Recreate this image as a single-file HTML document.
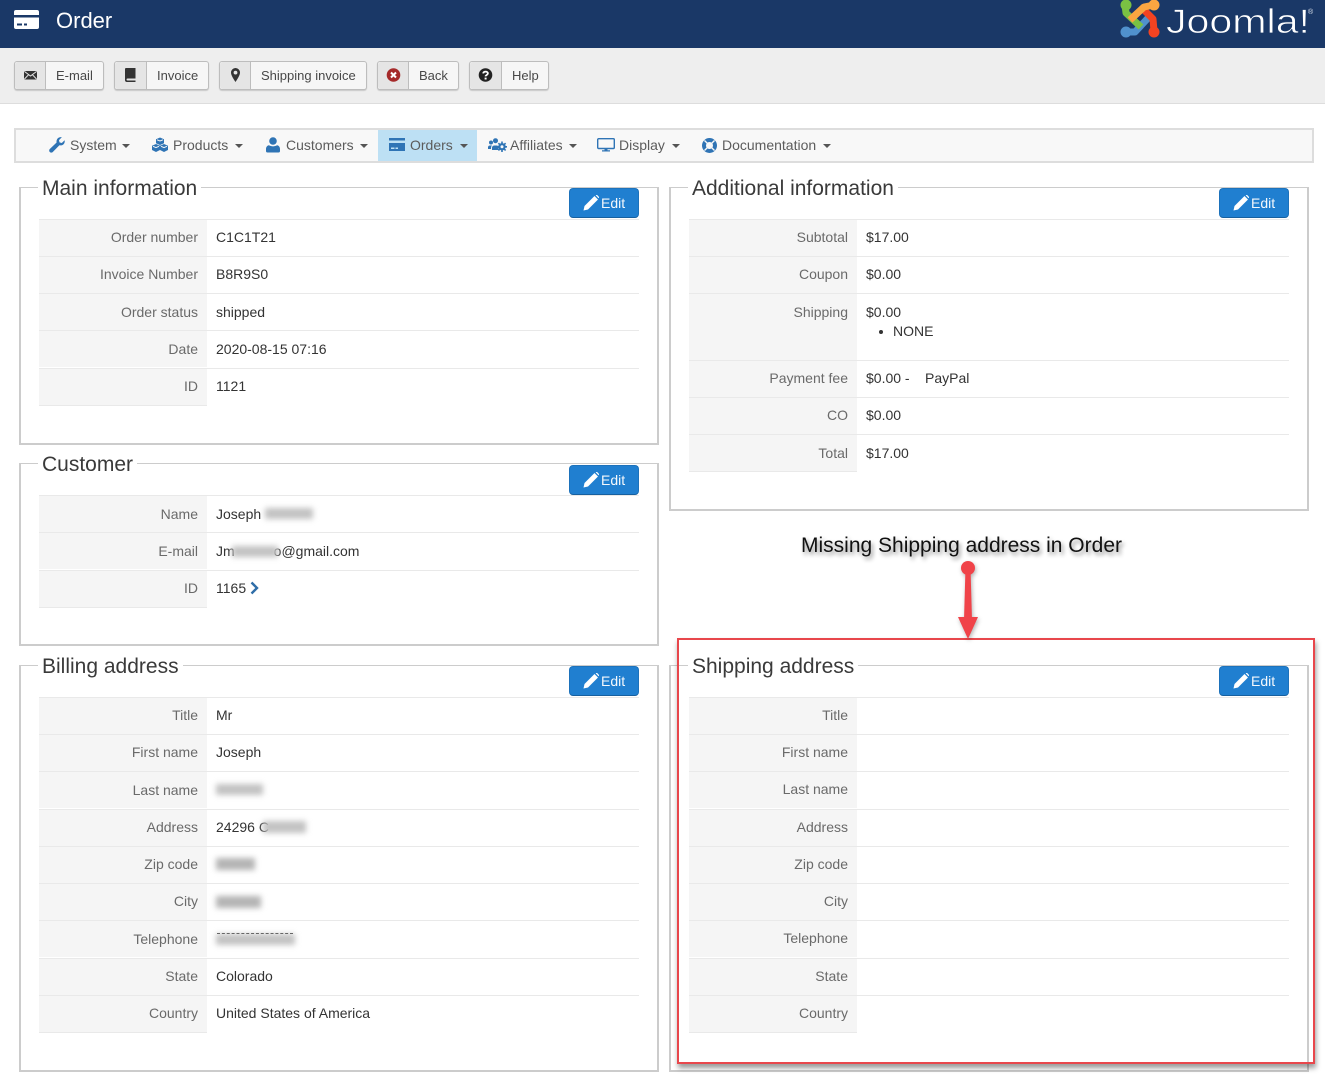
<!DOCTYPE html>
<html><head><meta charset="utf-8"><title>Order</title>
<style>
html,body{margin:0;padding:0;background:#fff}
body{position:relative;width:1325px;height:1080px;overflow:hidden;font-family:"Liberation Sans",sans-serif;font-size:14px;color:#333}
.a,svg.a{position:absolute;display:block}
.hd{left:0;top:0;width:1325px;height:48px;background:#1a3867}
.tb{left:0;top:48px;width:1325px;height:55px;background:#eee;border-bottom:1px solid #ddd}
.btn{position:absolute;top:61px;height:27px;background:#f6f6f6;border:1px solid #bdbdbd;border-radius:3px;box-shadow:0 1px 1px rgba(0,0,0,.16);font-size:13px;line-height:28px;color:#484848}
.btn i{position:absolute;left:0;top:0;bottom:0;width:30px;background:#e5e5e5;border-right:1px solid #bdbdbd;border-radius:3px 0 0 3px}
.btn span{position:absolute;left:41px;white-space:nowrap}
.btn svg{position:absolute;left:8px;top:6px}
.nav{left:14px;top:128px;width:1296px;height:31px;background:#f8f8f8;border:2px solid #ddd}
.n{position:absolute;top:136px;height:18px;line-height:18px;color:#5c5c5c;white-space:nowrap}
.c{position:absolute;top:144px;width:0;height:0;border-left:4px solid transparent;border-right:4px solid transparent;border-top:4px solid #555}
.fs{position:absolute;box-sizing:border-box;width:640px;border:solid #ccc;border-width:1px 2px 2px 2px}
.lg{position:absolute;top:177px;height:24px;line-height:24px;background:#fff;font-size:21px;padding:0 4px;color:#3a3a3a;white-space:nowrap}
.e{position:absolute;width:68px;height:28px;background:#207fd0;border:1px solid #1d72bb;border-bottom-color:#17609f;border-radius:4px;color:#f4f8fc;line-height:28px;font-size:14px}
.e span{position:absolute;left:31px}
.e svg{position:absolute;left:13px;top:6px}
.r{position:absolute;width:600px;height:36px;border-top:1px solid #e9e9e9;line-height:34px}
.r.d{line-height:36px}
.r b{position:absolute;left:0;top:0;width:159px;height:36px;padding-right:9px;text-align:right;font-weight:normal;color:#6a6a6a;background:#f5f5f5}
.r u{position:absolute;left:177px;top:0;text-decoration:none;white-space:nowrap;color:#333}
.end{position:absolute;width:168px;height:1px;background:#e9e9e9}
.bl{position:absolute;background:#c2c2c2;filter:blur(3px);height:11px}
</style></head><body>

<div class="a hd"></div>
<svg class="a" style="left:14px;top:10px" width="25" height="19" viewBox="0 0 25 19"><path fill="#fff" fill-rule="evenodd" d="M2 0h21a2 2 0 0 1 2 2v3H0V2a2 2 0 0 1 2-2zM0 7.500h25V17a2 2 0 0 1-2 2H2a2 2 0 0 1-2-2zM3 13.500v2h5v-2zm7 0v2h3v-2z"/></svg>
<div class="a" style="left:56px;top:8px;font-size:22px;line-height:26px;color:#fff">Order</div>

<svg class="a" style="left:1120px;top:0" width="42" height="40" viewBox="0 0 42 40">
<g fill="none" stroke-width="7" stroke-linejoin="round">
<path stroke="#5091cd" d="M5 32L15 32L29 17"/>
<path stroke="#f44321" d="M34 31L33 19L21 7"/>
<path stroke="#7ac143" d="M5 5L6 13L21 27"/>
<path stroke="#f9a541" d="M34 5L24 7L10 20"/>
</g>
<circle cx="6" cy="5" r="5.500" fill="#7ac143"/><circle cx="34" cy="5" r="5.500" fill="#f9a541"/><circle cx="34" cy="32" r="5.500" fill="#f44321"/><circle cx="6" cy="32" r="5.500" fill="#5091cd"/>
</svg>
<svg class="a" style="left:1160px;top:0" width="165" height="48"><text x="6" y="33" fill="#fff" stroke="#1a3867" stroke-width=".7" font-family="Liberation Sans" font-size="34" textLength="144" lengthAdjust="spacingAndGlyphs">Joomla!</text><text x="148" y="14" fill="#dfe5ee" font-family="Liberation Sans" font-size="7">®</text></svg>

<div class="a tb"></div>

<div class="btn" style="left:14px;width:88px"><i></i><span>E-mail</span>
<svg width="15" height="14" viewBox="0 0 15 14"><rect x="1" y="3" width="13" height="8.500" rx="1" fill="#333"/><path d="M1.500 3.500L7.500 8L13.500 3.500M1.500 11L5.500 6.800M13.500 11L9.500 6.800" stroke="#e6e6e6" stroke-width="1" fill="none"/></svg></div>
<div class="btn" style="left:114px;width:93px"><i style="width:31px"></i><span style="left:42px">Invoice</span>
<svg width="15" height="14" viewBox="0 0 15 14"><path fill="#333" d="M3 0h9.500v10.500H4.500a1 1 0 0 0 0 2h8V14H4a2 2 0 0 1-2-2V1a1 1 0 0 1 1-1z"/></svg></div>
<div class="btn" style="left:219px;width:146px"><i></i><span style="left:41px">Shipping invoice</span>
<svg width="15" height="14" viewBox="0 0 15 14"><path fill="#333" fill-rule="evenodd" d="M7.500 0a4.500 4.500 0 0 1 4.500 4.500C12 7.500 8.800 12 7.500 14 6.200 12 3 7.500 3 4.500A4.500 4.500 0 0 1 7.500 0zm0 2.700a1.900 1.900 0 1 0 0 3.800 1.900 1.900 0 0 0 0-3.800z"/></svg></div>
<div class="btn" style="left:377px;width:80px"><i></i><span>Back</span>
<svg width="15" height="14" viewBox="0 0 15 14"><circle cx="7.500" cy="7" r="6.800" fill="#a52a2a"/><path d="M5 4.500l5 5M10 4.500l-5 5" stroke="#fff" stroke-width="2"/></svg></div>
<div class="btn" style="left:469px;width:78px"><i style="width:31px"></i><span style="left:42px">Help</span>
<svg width="15" height="14" viewBox="0 0 15 14"><circle cx="7.500" cy="7" r="6.800" fill="#222"/><path d="M5.200 5.400C5.400 3 9.900 3 9.900 5.400 9.900 7 7.600 6.900 7.600 8.400" stroke="#fff" stroke-width="1.800" fill="none"/><rect x="6.600" y="9.600" width="2" height="1.900" fill="#fff"/></svg></div>

<div class="a nav"></div>
<div class="a" style="left:378px;top:130px;width:99px;height:31px;background:#bde0f4"></div>

<svg class="a" style="left:49px;top:137px" width="16" height="16" viewBox="0 0 16 16"><path fill="#2f74b5" d="M15.600 3.300c.5 2-.4 4-2.300 4.800-1 .4-2 .4-2.900.1L3.800 15a2.100 2.100 0 0 1-3-3l6.800-6.500C7.200 3.400 8.100 1.300 10 .5c1-.4 2-.5 2.800-.2L10 3.100l.5 2.300 2.300.6z"/></svg>
<div class="n" style="left:70px">System</div><div class="c" style="left:122px"></div>

<svg class="a" style="left:152px;top:137px" width="16" height="16" viewBox="0 0 16 16"><g fill="#2f74b5"><path d="M8 .5l4 1.700v4L8 8 4 6.200v-4z"/><path d="M4 7l4 1.700v4.300L4 15 0 13V8.700z"/><path d="M12 7l4 1.700V13l-4 2-4-2V8.700z"/></g><path d="M5 2.800L8 4l3-1.200M1 9.300l3 1.300 3-1.300M9 9.300l3 1.300 3-1.300" stroke="#f8f8f8" stroke-width="1" fill="none"/></svg>
<div class="n" style="left:173px">Products</div><div class="c" style="left:235px"></div>

<svg class="a" style="left:266px;top:137px" width="14" height="16" viewBox="0 0 14 16"><circle cx="7" cy="4" r="3.800" fill="#2f74b5"/><path fill="#2f74b5" d="M3 8.300c2.300 1.400 5.700 1.400 8 0 1.800.3 3 1.700 3 3.700v2a1.500 1.500 0 0 1-1.500 1.500h-11A1.500 1.500 0 0 1 0 14v-2c0-2 1.200-3.400 3-3.700z"/></svg>
<div class="n" style="left:286px">Customers</div><div class="c" style="left:360px"></div>

<svg class="a" style="left:389px;top:138px" width="16" height="13" viewBox="0 0 16 13"><path fill="#2f74b5" fill-rule="evenodd" d="M0 0h16v2.500H0zM0 5h16v8H0zM2 9.500v1.500h3.500V9.500zm4.500 0v1.500h2.500V9.500z"/></svg>
<div class="n" style="left:410px">Orders</div><div class="c" style="left:460px"></div>

<svg class="a" style="left:488px;top:138px" width="19" height="14" viewBox="0 0 19 14"><g fill="#2f74b5"><circle cx="3" cy="4.500" r="2"/><circle cx="7.500" cy="2.700" r="2.500"/><path d="M0 11V9a2 2 0 0 1 2-1.500h2A3 3 0 0 0 3 10v1z"/><path d="M4 12V9.500a2.500 2.500 0 0 1 2.500-2h2c1 0 1.700.4 2 1V12z"/><circle cx="14" cy="8.800" r="3.700"/><path d="M14 3.500v10.600M8.800 8.800h10.400M10.400 5.200l7.200 7.200M17.600 5.200l-7.200 7.200" stroke="#2f74b5" stroke-width="1.600"/></g><circle cx="14" cy="8.800" r="1.500" fill="#f8f8f8"/></svg>
<div class="n" style="left:510px">Affiliates</div><div class="c" style="left:569px"></div>

<svg class="a" style="left:597px;top:138px" width="18" height="14" viewBox="0 0 18 14"><rect x=".7" y=".7" width="16.600" height="9.800" rx="1" fill="none" stroke="#2f74b5" stroke-width="1.400"/><path fill="#2f74b5" d="M7.500 11h3v1.300h2.500v1.200H5v-1.200h2.500z"/></svg>
<div class="n" style="left:619px">Display</div><div class="c" style="left:672px"></div>

<svg class="a" style="left:702px;top:138px" width="15" height="15" viewBox="0 0 15 15"><circle cx="7.500" cy="7.500" r="5.500" fill="none" stroke="#2f74b5" stroke-width="4"/><path d="M2.500 2.500l3 3M12.500 2.500l-3 3M2.500 12.500l3-3M12.500 12.500l-3-3" stroke="#f8f8f8" stroke-width="1.400"/></svg>
<div class="n" style="left:722px">Documentation</div><div class="c" style="left:823px"></div>

<!-- Fieldsets -->
<div class="fs" style="left:19px;top:187px;height:258px"></div>
<div class="fs" style="left:19px;top:463px;height:183px"></div>
<div class="fs" style="left:19px;top:665px;height:407px"></div>
<div class="fs" style="left:669px;top:187px;height:324px"></div>
<div class="fs" style="left:669px;top:665px;height:407px"></div>

<div class="lg" style="left:38px">Main information</div>
<div class="lg" style="left:38px;top:453px">Customer</div>
<div class="lg" style="left:38px;top:655px">Billing address</div>
<div class="lg" style="left:688px">Additional information</div>
<div class="lg" style="left:688px;top:655px">Shipping address</div>

<!-- Main information -->
<div class="r" style="left:39px;top:219px"><b>Order number</b><u>C1C1T21</u></div>
<div class="r" style="left:39px;top:256px"><b>Invoice Number</b><u>B8R9S0</u></div>
<div class="r d" style="left:39px;top:293px"><b>Order status</b><u>shipped</u></div>
<div class="r d" style="left:39px;top:330px"><b>Date</b><u>2020-08-15 07:16</u></div>
<div class="r" style="left:39px;top:368px"><b>ID</b><u>1121</u></div>
<div class="end" style="left:39px;top:405px"></div>

<!-- Customer -->
<div class="r d" style="left:39px;top:495px"><b>Name</b><u>Joseph</u></div>
<div class="r d" style="left:39px;top:532px"><b>E-mail</b><u>Jm<span style="display:inline-block;width:39px"></span>o@gmail.com</u></div>
<div class="r" style="left:39px;top:570px"><b>ID</b><u>1165</u></div>
<div class="end" style="left:39px;top:607px"></div>
<div class="bl" style="left:265px;top:508px;width:48px"></div>
<div class="bl" style="left:232px;top:546px;width:46px;height:11px"></div>
<svg class="a" style="left:249px;top:581px" width="10" height="14" viewBox="0 0 10 14"><path d="M2.500 1.500L8 7l-5.500 5.500" fill="none" stroke="#2f6ea8" stroke-width="2.400"/></svg>

<!-- Billing -->
<div class="r" style="left:39px;top:697px"><b>Title</b><u>Mr</u></div>
<div class="r" style="left:39px;top:734px"><b>First name</b><u>Joseph</u></div>
<div class="r d" style="left:39px;top:771px"><b>Last name</b></div>
<div class="r" style="left:39px;top:809px"><b>Address</b><u>24296 C</u></div>
<div class="r" style="left:39px;top:846px"><b>Zip code</b></div>
<div class="r" style="left:39px;top:883px"><b>City</b></div>
<div class="r d" style="left:39px;top:920px"><b>Telephone</b></div>
<div class="r" style="left:39px;top:958px"><b>State</b><u>Colorado</u></div>
<div class="r" style="left:39px;top:995px"><b>Country</b><u>United States of America</u></div>
<div class="end" style="left:39px;top:1032px"></div>
<div class="bl" style="left:216px;top:784px;width:47px"></div>
<div class="bl" style="left:263px;top:821px;width:43px;height:12px"></div>
<div class="bl" style="left:216px;top:858px;width:39px;height:12px;background:#b4b4b4"></div>
<div class="bl" style="left:216px;top:896px;width:45px;height:12px;background:#b4b4b4"></div>
<div class="bl" style="left:216px;top:934px;width:79px;height:11px"></div>
<div class="a" style="left:217px;top:933px;width:76px;height:0;border-top:1px dashed #666"></div>

<!-- Additional -->
<div class="r" style="left:689px;top:219px"><b>Subtotal</b><u>$17.00</u></div>
<div class="r" style="left:689px;top:256px"><b>Coupon</b><u>$0.00</u></div>
<div class="r d" style="left:689px;top:293px;height:66px"><b style="height:66px">Shipping</b><u>$0.00</u>
<u style="left:204px;top:19px">NONE</u><span class="a" style="left:190px;top:36px;width:4px;height:4px;border-radius:50%;background:#333"></span></div>
<div class="r" style="left:689px;top:360px"><b>Payment fee</b><u>$0.00 -</u><u style="left:236px">PayPal</u></div>
<div class="r" style="left:689px;top:397px"><b>CO</b><u>$0.00</u></div>
<div class="r d" style="left:689px;top:434px"><b>Total</b><u>$17.00</u></div>
<div class="end" style="left:689px;top:471px"></div>

<!-- Shipping -->
<div class="r" style="left:689px;top:697px"><b>Title</b></div>
<div class="r" style="left:689px;top:734px"><b>First name</b></div>
<div class="r" style="left:689px;top:771px"><b>Last name</b></div>
<div class="r" style="left:689px;top:809px"><b>Address</b></div>
<div class="r" style="left:689px;top:846px"><b>Zip code</b></div>
<div class="r" style="left:689px;top:883px"><b>City</b></div>
<div class="r" style="left:689px;top:920px"><b>Telephone</b></div>
<div class="r" style="left:689px;top:958px"><b>State</b></div>
<div class="r" style="left:689px;top:995px"><b>Country</b></div>
<div class="end" style="left:689px;top:1032px"></div>

<!-- Edit buttons -->
<div class="e" style="left:569px;top:188px"><svg width="16" height="16" viewBox="0 0 16 16"><path fill="#fff" d="M11.500 1l3.500 3.500L5 14.500 0.500 15.500 1.500 11zM12.700.2l.3-.2c.5-.2 1-.1 1.400.3l1.300 1.300c.4.400.4 1 .1 1.400l-.3.300z"/></svg><span>Edit</span></div>
<div class="e" style="left:569px;top:465px"><svg width="16" height="16" viewBox="0 0 16 16"><path fill="#fff" d="M11.500 1l3.500 3.500L5 14.500 0.500 15.500 1.500 11zM12.700.2l.3-.2c.5-.2 1-.1 1.400.3l1.300 1.300c.4.400.4 1 .1 1.400l-.3.300z"/></svg><span>Edit</span></div>
<div class="e" style="left:569px;top:666px"><svg width="16" height="16" viewBox="0 0 16 16"><path fill="#fff" d="M11.500 1l3.500 3.500L5 14.500 0.500 15.500 1.500 11zM12.700.2l.3-.2c.5-.2 1-.1 1.400.3l1.300 1.300c.4.400.4 1 .1 1.400l-.3.300z"/></svg><span>Edit</span></div>
<div class="e" style="left:1219px;top:188px"><svg width="16" height="16" viewBox="0 0 16 16"><path fill="#fff" d="M11.500 1l3.500 3.500L5 14.500 0.500 15.500 1.500 11zM12.700.2l.3-.2c.5-.2 1-.1 1.400.3l1.300 1.300c.4.400.4 1 .1 1.400l-.3.300z"/></svg><span>Edit</span></div>
<div class="e" style="left:1219px;top:666px"><svg width="16" height="16" viewBox="0 0 16 16"><path fill="#fff" d="M11.500 1l3.500 3.500L5 14.500 0.500 15.500 1.500 11zM12.700.2l.3-.2c.5-.2 1-.1 1.400.3l1.300 1.300c.4.400.4 1 .1 1.400l-.3.300z"/></svg><span>Edit</span></div>

<!-- Annotation -->
<div class="a" style="left:801px;top:533px;font-size:21px;line-height:26px;color:#111;white-space:nowrap;text-shadow:2px 3px 4px rgba(0,0,0,.45)">Missing Shipping address in Order</div>
<div class="a" style="left:677px;top:638px;width:634px;height:422px;border:2px solid #e8474c;box-shadow:1px 4px 5px rgba(0,0,0,.4)"></div>
<svg class="a" style="left:950px;top:555px;overflow:visible;filter:drop-shadow(1px 2px 2px rgba(0,0,0,.3))" width="36" height="90" viewBox="0 0 36 90">
<g fill="#f04349"><circle cx="18" cy="13" r="7"/><path d="M15.500 13H20.500L22 65H14z"/><path d="M8 62H28L18 84z"/></g></svg>
</body></html>
